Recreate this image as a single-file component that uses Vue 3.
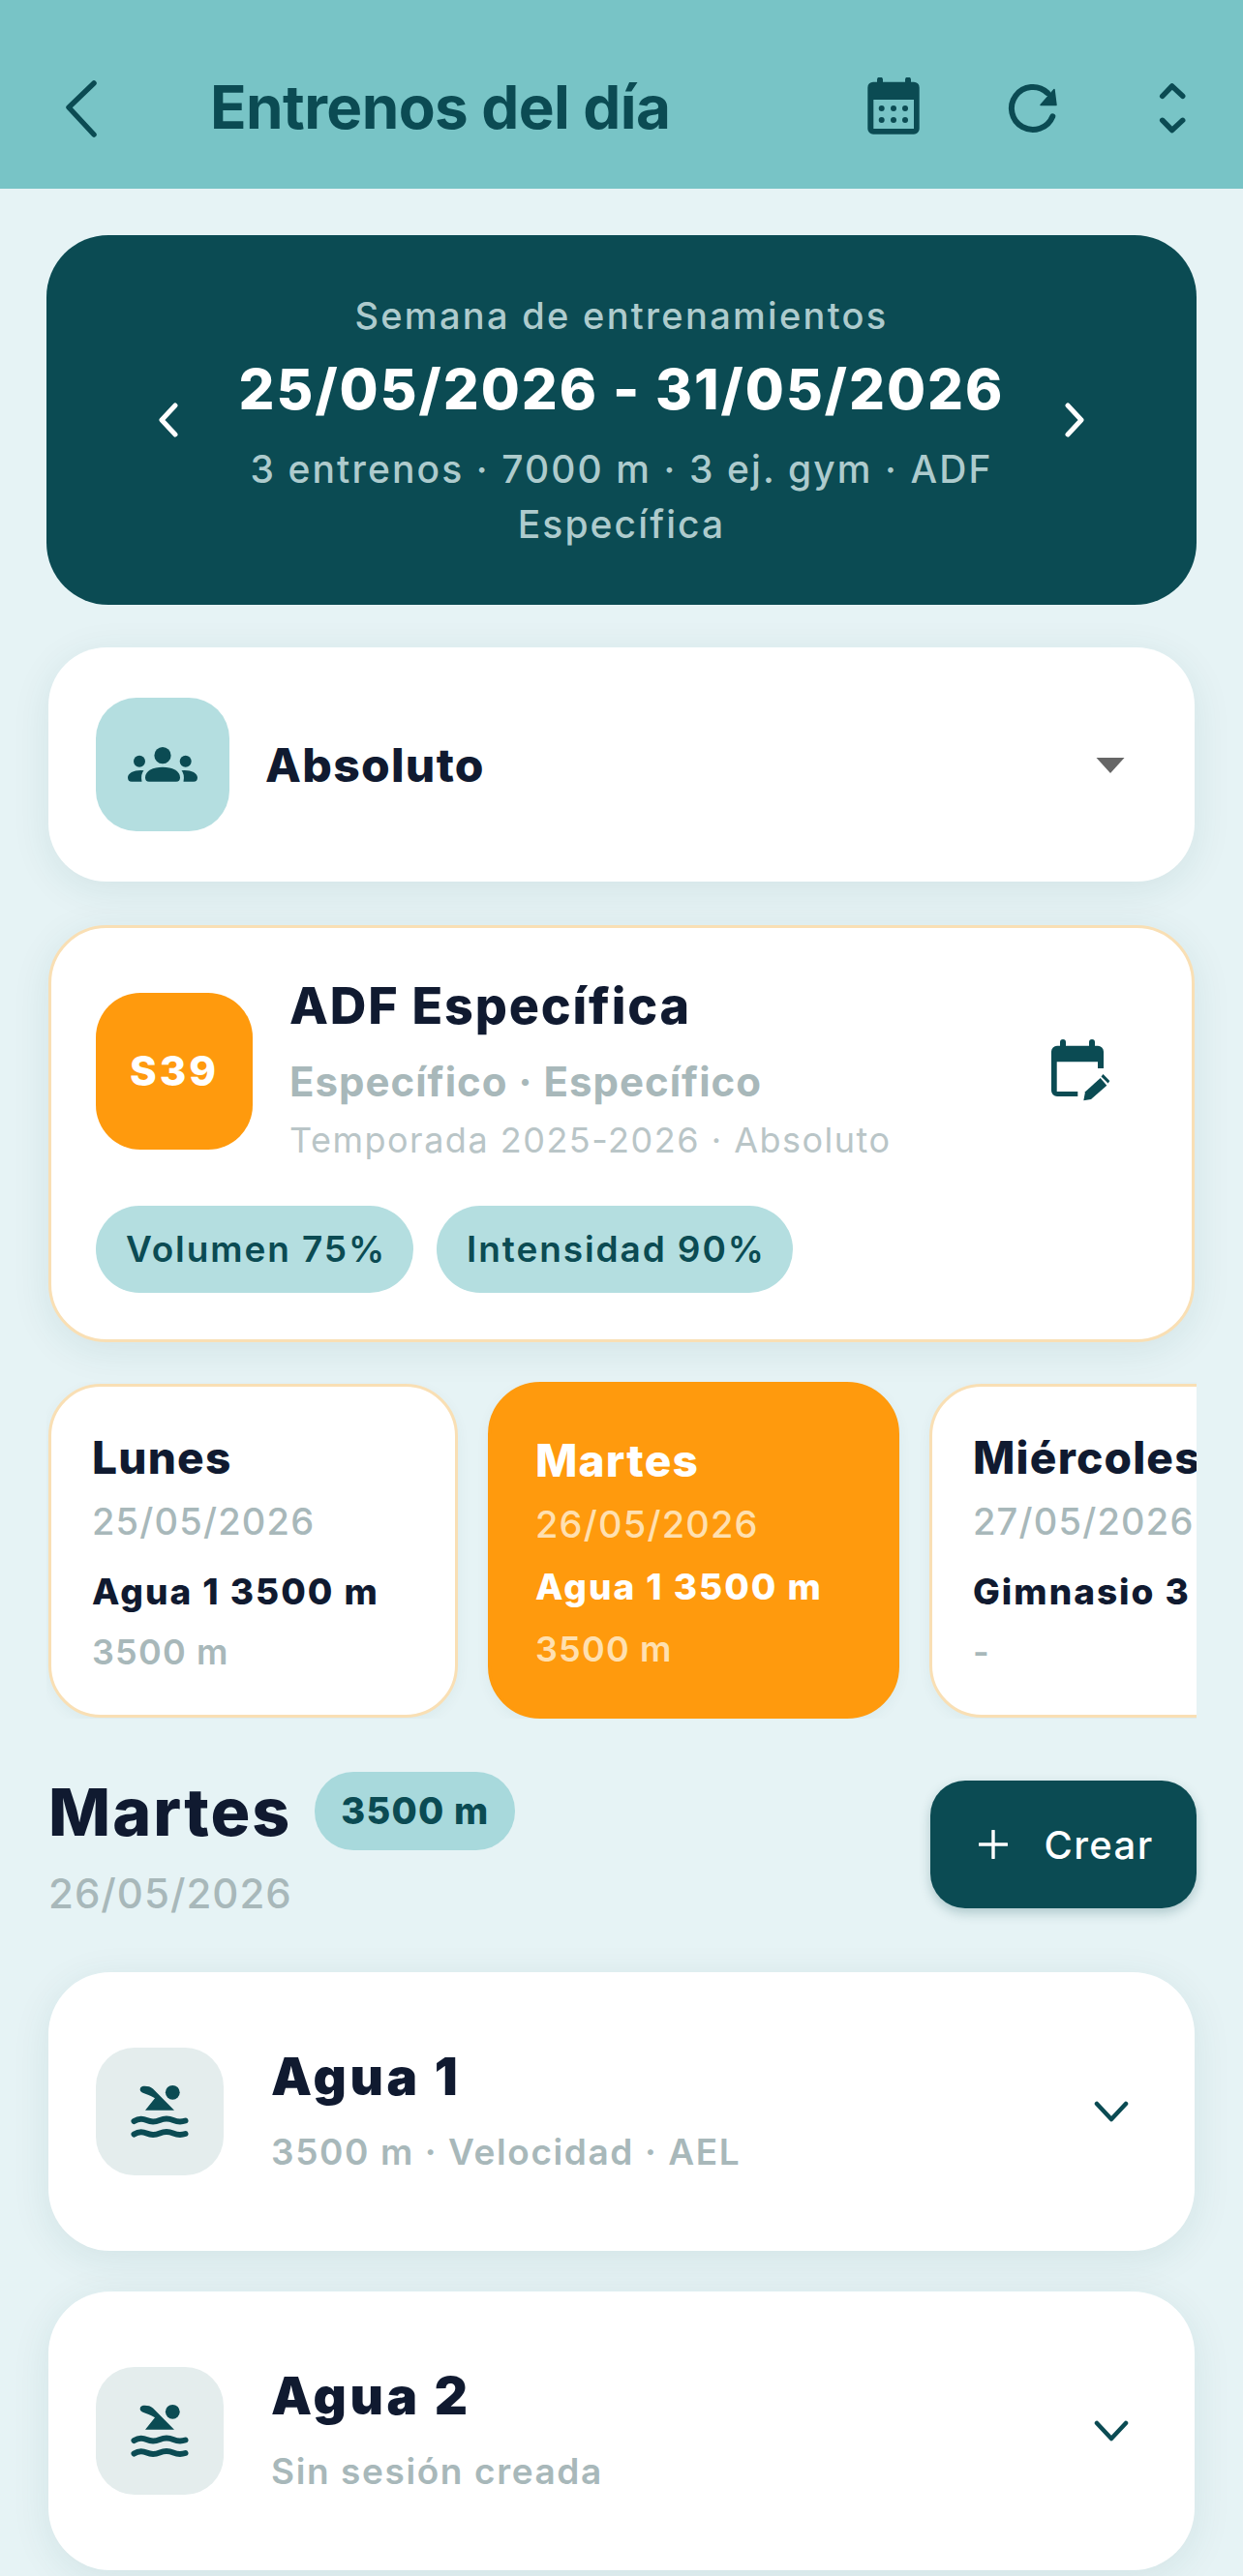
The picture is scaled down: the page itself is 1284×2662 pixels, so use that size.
<script setup>
const days = [
  { name: 'Lunes', date: '25/05/2026', line: 'Agua 1 3500 m', sub: '3500 m', active: false },
  { name: 'Martes', date: '26/05/2026', line: 'Agua 1 3500 m', sub: '3500 m', active: true },
  { name: 'Miércoles', date: '27/05/2026', line: 'Gimnasio 3 ej.', sub: '-', active: false }
]
const sessions = [
  { title: 'Agua 1', sub: '3500 m · Velocidad · AEL' },
  { title: 'Agua 2', sub: 'Sin sesión creada' }
]
</script>

<template>
  <div class="page">
    <header class="topbar">
      <svg class="back" width="40" height="64" viewBox="0 0 40 64"><path d="M33 7 L7 32 L33 60" /></svg>
      <h1 class="title">Entrenos del día</h1>
      <div class="actions">
        <svg width="64" height="64" viewBox="0 0 64 64">
          <path fill-rule="evenodd" d="M11 4.7H15V2.5a3 3 0 0 1 6 0V4.7H44V2.5a3 3 0 0 1 6 0V4.7H53a5.7 5.7 0 0 1 5.7 5.7V53a5.7 5.7 0 0 1-5.7 5.7H11A5.7 5.7 0 0 1 5.3 53V10.4A5.7 5.7 0 0 1 11 4.7ZM11.3 23V53H53V23Z" fill="#0b4b53" />
          <g fill="#0b4b53"><circle cx="19.7" cy="32" r="3" /><circle cx="32" cy="32" r="3" /><circle cx="44" cy="32" r="3" /><circle cx="19.7" cy="44" r="3" /><circle cx="32" cy="44" r="3" /><circle cx="44" cy="44" r="3" /></g>
        </svg>
        <svg width="64" height="64" viewBox="0 0 64 64">
          <path d="M52.3 40.3A22 22 0 1 1 47 16" fill="none" stroke="#0b4b53" stroke-width="6" stroke-linecap="round" />
          <path d="M54 12.5L56 28.5H40Z" fill="#0b4b53" stroke="#0b4b53" stroke-width="1.5" stroke-linejoin="round" />
        </svg>
        <svg width="64" height="64" viewBox="0 0 64 64">
          <path d="M21.7 19.3L31.7 9L42.7 19.3M21.7 44.3L31.7 54.5L42.7 44.3" fill="none" stroke="#0b4b53" stroke-width="5.5" stroke-linecap="round" stroke-linejoin="round" />
        </svg>
      </div>
    </header>

    <main class="content">
      <section class="hero">
        <svg class="hero-arrow" width="24" height="36" viewBox="0 0 24 36"><path d="M19 3L5 18L19 33" /></svg>
        <div class="hero-text">
          <div class="hero-label">Semana de entrenamientos</div>
          <div class="hero-date">25/05/2026 - 31/05/2026</div>
          <div class="hero-sub">3 entrenos · 7000 m · 3 ej. gym · ADF Específica</div>
        </div>
        <svg class="hero-arrow" width="24" height="36" viewBox="0 0 24 36"><path d="M5 3L19 18L5 33" /></svg>
      </section>

      <section class="group card">
        <div class="group-icon">
          <svg width="80" height="80" viewBox="0 0 80 80" fill="#0b4b53">
            <circle cx="40" cy="30.7" r="8.6" />
            <circle cx="16" cy="36.7" r="6" />
            <circle cx="63.7" cy="36.7" r="6" />
            <path d="M22 53.5C22 46.5 30 42.7 40 42.7S58 46.5 58 53.5Q58 57.7 54 57.7H26Q22 57.7 22 53.5Z" />
            <path d="M17.5 46C10 46 4 49 4 53.5Q4 57.7 8 57.7H18.5Q17 50 20.5 46.2Z" />
            <path d="M62.5 46C70 46 76 49 76 53.5Q76 57.7 72 57.7H61.5Q63 50 59.5 46.2Z" />
          </svg>
        </div>
        <div class="group-name">Absoluto</div>
        <svg class="caret" width="30" height="16" viewBox="0 0 30 16"><path d="M0.5 0H29.5L15 16Z" fill="#666" /></svg>
      </section>

      <section class="plan card">
        <div class="plan-top">
          <div class="plan-badge">S39</div>
          <div class="plan-info">
            <div class="plan-title">ADF Específica</div>
            <div class="plan-type">Específico · Específico</div>
            <div class="plan-season">Temporada 2025-2026 · Absoluto</div>
          </div>
          <svg class="plan-edit" width="70" height="72" viewBox="0 0 70 72" fill="#0b4b53">
            <path d="M12 9.7H15V6a3 3 0 0 1 6 0V9.7H45V6a3 3 0 0 1 6 0V9.7H54a6 6 0 0 1 6 6V33H54V26.3H11.7V57H33.3V62H12a6 6 0 0 1-6-6V15.7A6 6 0 0 1 12 9.7Z" />
            <path d="M39.3 66.3L41 57.3L56.7 43L63.3 50.7L47 65Z" />
            <path d="M59.5 39L66.3 46L64.6 48.5L57.5 41.5Z" />
          </svg>
        </div>
        <div class="chips">
          <span class="chip">Volumen 75%</span>
          <span class="chip">Intensidad 90%</span>
        </div>
      </section>

      <section class="days">
        <article v-for="d in days" :key="d.name" class="day" :class="{ active: d.active }">
          <div class="day-name">{{ d.name }}</div>
          <div class="day-date">{{ d.date }}</div>
          <div class="day-line">{{ d.line }}</div>
          <div class="day-sub">{{ d.sub }}</div>
        </article>
      </section>

      <section class="day-head">
        <div>
          <div class="day-head-row">
            <h2 class="day-title">Martes</h2>
            <span class="day-total">3500 m</span>
          </div>
          <div class="day-head-date">26/05/2026</div>
        </div>
        <button class="create">
          <svg width="30" height="30" viewBox="0 0 30 30"><path d="M15 1V29M1 15H29" stroke="#fff" stroke-width="3.4" stroke-linecap="round" /></svg>
          <span>Crear</span>
        </button>
      </section>

      <section class="sessions">
        <article v-for="s in sessions" :key="s.title" class="session card">
          <div class="session-icon">
            <svg width="72" height="72" viewBox="0 0 72 72">
              <circle cx="49.3" cy="16.3" r="7.4" fill="#0b4b53" />
              <path d="M18 10C22 9.5 26 10 29 12.5L51 34.7H21L31 22.3C27 19.8 22 18 18 16.5A3.4 3.4 0 0 1 18 10Z" fill="#0b4b53" />
              <path d="M9.5 46C14 43 18 43 22.5 45S31 47 36 45S45 43 50 45S58 47 62.5 45.5M9.5 59.5C14 56.5 18 56.5 22.5 58.5S31 60.5 36 58.5S45 56.5 50 58.5S58 60.5 62.5 59" fill="none" stroke="#0b4b53" stroke-width="6" stroke-linecap="round" />
            </svg>
          </div>
          <div class="session-text">
            <div class="session-title">{{ s.title }}</div>
            <div class="session-sub">{{ s.sub }}</div>
          </div>
          <svg class="session-chevron" width="36" height="24" viewBox="0 0 36 24"><path d="M3 4L18 20L33 4" /></svg>
        </article>
      </section>
    </main>
  </div>
</template>

<style>
html, body { margin: 0; background: #e6f3f5; }
</style>

<style scoped>
.page {
  width: 1284px;
  height: 2662px;
  overflow: hidden;
  background: #e6f3f5;
  font-family: Inter, "Liberation Sans", sans-serif;
  color: #101a30;
}
.topbar {
  height: 195px;
  box-sizing: border-box;
  background: #78c4c6;
  display: flex;
  align-items: center;
  padding: 27px 41px 0 64px;
}
.back { flex: none; margin-top: -1px; }
.back path { fill: none; stroke: #0b4b53; stroke-width: 5.5; stroke-linecap: round; stroke-linejoin: round; }
.title {
  margin: 0 0 0 113px;
  font-size: 62px;
  font-weight: 700;
  letter-spacing: -0.6px;
  line-height: 80px;
  color: #0b4b53;
}
.actions {
  margin-left: auto;
  display: flex;
  gap: 80px;
  margin-top: 2px;
}
.content { padding: 48px 48px 0; }
.card {
  background: #fff;
  box-shadow: 0 8px 40px rgba(11, 75, 83, 0.09);
}
.hero {
  height: 382px;
  border-radius: 64px;
  background: #0b4b53;
  display: flex;
  align-items: center;
  justify-content: center;
  gap: 36px;
  text-align: center;
}
.hero-arrow path { fill: none; stroke: #fff; stroke-width: 5; stroke-linecap: round; stroke-linejoin: round; }
.hero-text { width: 840px; margin-top: 3px; }
.hero-label {
  font-size: 38px;
  font-weight: 500;
  letter-spacing: 2.3px;
  line-height: 50px;
  color: #aecbcd;
}
.hero-date {
  margin-top: 16px;
  font-size: 58px;
  font-weight: 800;
  letter-spacing: 2px;
  line-height: 70px;
  color: #fff;
}
.hero-sub {
  margin-top: 19px;
  font-size: 39px;
  font-weight: 500;
  letter-spacing: 2.1px;
  line-height: 57px;
  color: #aecbcd;
}
.group {
  margin: 44px 2px 0;
  height: 242px;
  border-radius: 60px;
  display: flex;
  align-items: center;
  padding: 0 47px 0 49px;
}
.group-icon {
  width: 138px;
  height: 138px;
  border-radius: 42px;
  background: #b4dee0;
  display: flex;
  align-items: center;
  justify-content: center;
}
.group-name {
  margin-left: 37px;
  font-size: 48px;
  font-weight: 800;
  letter-spacing: 1.3px;
}
.caret { margin-left: auto; margin-right: 25px; margin-top: 2px; }
.plan {
  margin: 45px 2px 0;
  height: 431px;
  box-sizing: border-box;
  border-radius: 60px;
  border: 3px solid #f9dfb4;
  padding: 65px 46px 0;
}
.plan-top { display: flex; align-items: center; height: 165px; }
.plan-badge {
  width: 162px;
  height: 162px;
  border-radius: 46px;
  background: #ff9a0d;
  color: #fff;
  font-size: 42px;
  font-weight: 800;
  letter-spacing: 3px;
  display: flex;
  align-items: center;
  justify-content: center;
}
.plan-info { margin-left: 38px; align-self: flex-start; }
.plan-title { font-size: 52px; font-weight: 800; letter-spacing: 1.8px; line-height: 60px; margin-top: -14px; }
.plan-type { font-size: 42px; font-weight: 700; letter-spacing: 1px; line-height: 52px; color: #a8b8ba; margin-top: 22px; }
.plan-season { font-size: 36px; font-weight: 400; letter-spacing: 1.5px; line-height: 48px; color: #b9c5c7; margin-top: 10px; }
.plan-edit { margin-left: auto; margin-right: 35px; }
.chips { display: flex; gap: 24px; margin-top: 57px; }
.chip {
  height: 90px;
  box-sizing: border-box;
  padding: 0 28px 0 31px;
  border-radius: 45px;
  background: #b4dee0;
  color: #0b4b53;
  font-size: 37px;
  font-weight: 600;
  letter-spacing: 1.9px;
  line-height: 90px;
}
.days {
  margin-top: 41px;
  padding-left: 2px;
  display: flex;
  align-items: center;
  gap: 31px;
  overflow: hidden;
  height: 348px;
}
.day {
  flex: none;
  width: 423px;
  height: 345px;
  box-sizing: border-box;
  border-radius: 54px;
  background: #fff;
  border: 3px solid #f9dfb4;
  padding: 45px 0 0 42px;
  box-shadow: 0 4px 14px rgba(11, 75, 83, 0.05);
}
.day.active {
  background: #ff9a0d;
  border-color: #ff9a0d;
  color: #fff;
  width: 425px;
  height: 348px;
  padding-left: 46px;
  padding-top: 50px;
}
.day-name { font-size: 46px; font-weight: 800; letter-spacing: 1.2px; line-height: 56px; white-space: nowrap; }
.day-date { font-size: 38px; font-weight: 500; letter-spacing: 1.2px; line-height: 50px; color: #a8b8ba; margin-top: 13px; white-space: nowrap; }
.day-line { font-size: 37px; font-weight: 800; letter-spacing: 2px; line-height: 50px; margin-top: 23px; white-space: nowrap; }
.day-sub { font-size: 36px; font-weight: 600; letter-spacing: 1.2px; line-height: 50px; color: #a8b8ba; margin-top: 12px; }
.day.active .day-date, .day.active .day-sub { color: #ffe0b0; }
.day.active .day-date { margin-top: 13px; }
.day.active .day-line { margin-top: 15px; }
.day.active .day-sub { margin-top: 14px; }
.day-head {
  margin-top: 55px;
  display: flex;
  justify-content: space-between;
  padding-left: 2px;
}
.day-head-row { display: flex; align-items: flex-start; gap: 24px; }
.day-title { margin: 1px 0 0; font-size: 68px; font-weight: 800; letter-spacing: 2px; line-height: 80px; }
.day-total {
  height: 81px;
  box-sizing: border-box;
  padding: 0 27px;
  border-radius: 40px;
  background: #a8d9dc;
  color: #0b4b53;
  font-size: 38px;
  font-weight: 800;
  letter-spacing: 1.2px;
  line-height: 81px;
}
.day-head-date { font-size: 42px; font-weight: 500; letter-spacing: 1px; line-height: 50px; color: #a8b8ba; margin-top: 20px; }
.create {
  margin-top: 9px;
  width: 275px;
  height: 132px;
  border: 0;
  border-radius: 36px;
  background: #0b4b53;
  color: #fff;
  font-family: inherit;
  font-size: 40px;
  font-weight: 500;
  letter-spacing: 1.4px;
  display: flex;
  align-items: center;
  justify-content: center;
  gap: 37px;
  padding: 0 0 0 6px;
  box-shadow: 0 5px 12px rgba(11, 75, 83, 0.25);
}
.sessions { margin: 56px 2px 0; display: flex; flex-direction: column; gap: 42px; }
.session {
  flex: none;
  height: 288px;
  border-radius: 64px;
  display: flex;
  align-items: center;
  padding: 0 68px 0 49px;
}
.session-icon {
  flex: none;
  width: 132px;
  height: 132px;
  border-radius: 40px;
  background: #e4eded;
  display: flex;
  align-items: center;
  justify-content: center;
}
.session-text { margin-left: 49px; margin-top: -1px; }
.session-title { font-size: 53px; font-weight: 900; letter-spacing: 3.6px; line-height: 64px; }
.session-sub { font-size: 37px; font-weight: 600; letter-spacing: 1.6px; line-height: 50px; color: #a8b8ba; margin-top: 21px; }
.session-chevron { margin-left: auto; }
.session-chevron path { fill: none; stroke: #0b4b53; stroke-width: 4.5; stroke-linecap: round; stroke-linejoin: round; }
</style>
